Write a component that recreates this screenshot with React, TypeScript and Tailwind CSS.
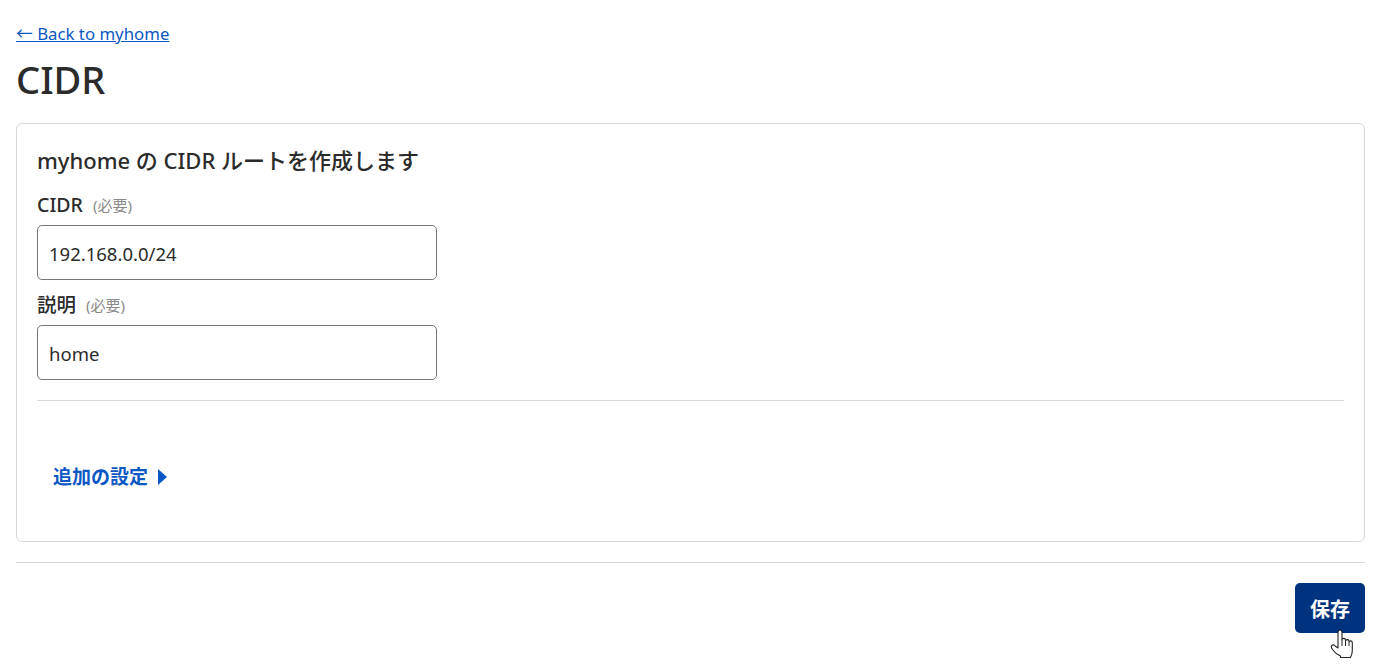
const sans = "font-['Noto_Sans','Noto_Sans_CJK_JP',sans-serif]";

const HandCursor = () => (
  <svg className="absolute left-[1329px] top-[628px]" width="27" height="33" viewBox="0 0 27 33">
    <path
      d="M9 20V4.500C9 3 9.800 2 11 2s2 1 2 2.500V12c0-1 .8-1.600 1.800-1.600s1.700.7 1.700 1.800v1c0-1 .8-1.600 1.700-1.600s1.800.7 1.800 1.800v1c0-.9.7-1.500 1.600-1.500s1.700.8 1.700 1.900v7.700c0 3-.7 4.700-1.700 6.500v.5H11.500v-1.500C9 27 6 25 3.500 21.500 2 19.500 2 18 3 17.300s2.300-.3 3.500 1L9 20z"
      fill="#fff"
      stroke="#222"
      strokeWidth="1.100"
      strokeLinejoin="round"
    />
    <path d="M13 12v6M16.500 13.500v4.500M20 15v3" stroke="#222" strokeWidth="1" fill="none" />
  </svg>
);

const Field = ({ label, value }: { label: string; value: string }) => (
  <div className="mb-[8px]">
    <div className="flex items-center h-[37px] pb-[3px]">
      <span className="text-[19.500px] font-medium text-[#2b2b2b] leading-none">{label}</span>
      <span className="ml-[10px] text-[15px] text-[#8a8a8a] leading-none">(必要)</span>
    </div>
    <input
      readOnly
      value={value}
      className={`${sans} block w-[400px] h-[55px] rounded-[5px] border border-[#767676] bg-white px-[11px] pt-[2px] text-[18.500px] text-[#2b2b2b]`}
    />
  </div>
);

export default function App() {
  return (
    <div className={`${sans} relative h-[664px] overflow-hidden bg-white pt-[21px] pl-[16px] pr-[15px] text-[#2b2b2b]`}>
      <a href="#" className="block text-[16.800px] leading-[25px] text-[#0b57c4] underline">
        ← Back to myhome
      </a>
      <h1 className="mt-[8px] text-[38px] font-medium leading-[50px]">CIDR</h1>
      <div className="mt-[19px] h-[419px] rounded-[6px] border border-[#d8d8d8] px-[20px] pt-[19px]">
        <h2 className="text-[22px] font-medium leading-[34px]">myhome の CIDR ルートを作成します</h2>
        <div className="mt-[11px]">
          <Field label="CIDR" value="192.168.0.0/24" />
          <Field label="説明" value="home" />
        </div>
        <div className="mt-[20px] border-t border-[#d8d8d8]" />
        <button className="mt-[63px] ml-[16px] flex items-center gap-[10px] text-[19px] font-semibold leading-[26px] text-[#0b57c4]">
          追加の設定
          <svg width="9" height="16" viewBox="0 0 9 16">
            <path d="M0 0l9 8-9 8z" fill="#0b57c4" />
          </svg>
        </button>
      </div>
      <div className="mt-[20px] border-t border-[#d8d8d8]" />
      <div className="mt-[20px] flex justify-end">
        <button className="h-[50px] w-[70px] rounded-[5px] bg-[#00337f] pt-[4px] text-[20px] font-bold text-white">保存</button>
      </div>
      <HandCursor />
    </div>
  );
}
